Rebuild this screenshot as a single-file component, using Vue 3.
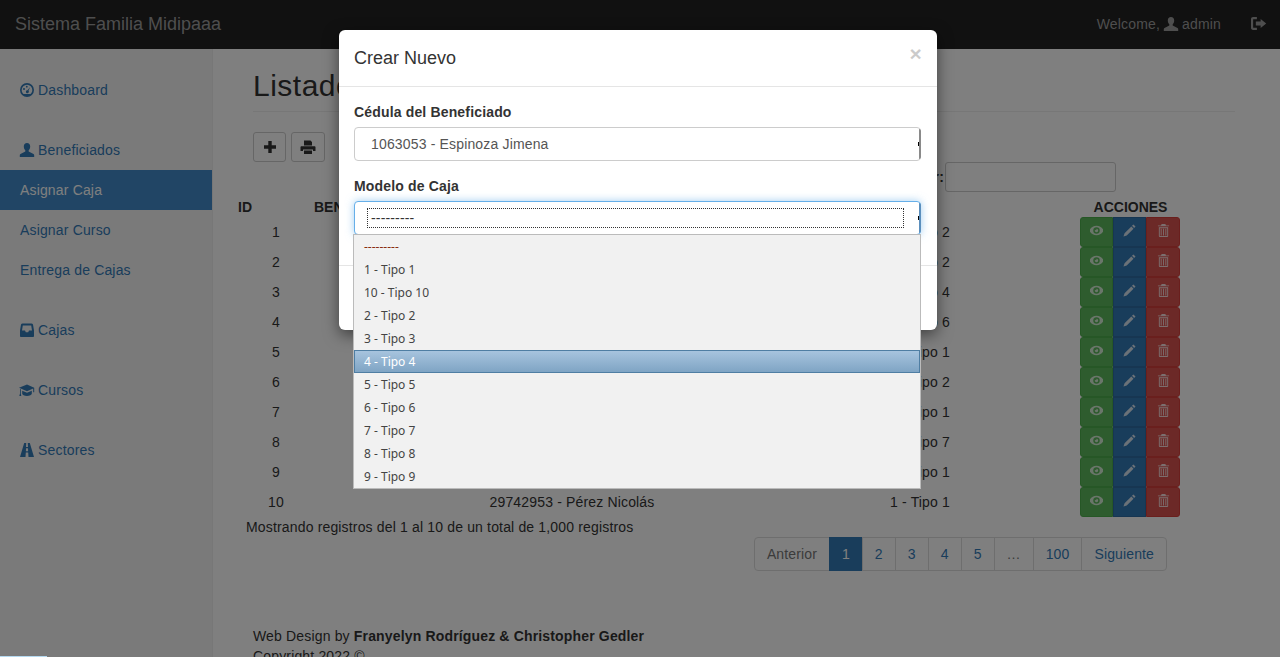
<template>
  <div class="page">
    <nav class="navbar">
      <span class="brand">Sistema Familia Midipaaa</span>
      <div class="nav-right">
        <span class="welcome">Welcome,
          <svg class="ico" :viewBox="box"><path :d="icons.user" /></svg>
          admin</span>
        <svg class="ico logout" :viewBox="box"><path :d="icons.logout" /></svg>
      </div>
    </nav>

    <div class="layout">
      <aside class="sidebar">
        <ul v-for="(group, g) in menu" :key="g" class="nav-group">
          <li v-for="item in group" :key="item.label" :class="{ active: item.active }">
            <svg v-if="item.icon" class="ico" :viewBox="box"><path :d="icons[item.icon]" fill-rule="evenodd" /></svg>
            {{ item.label }}
          </li>
        </ul>
      </aside>

      <main class="main">
        <h1>Listado de Asignaciones</h1>
        <div class="toolbar">
          <button class="btn-tool"><svg class="ico" :viewBox="box"><path :d="icons.plus" /></svg></button>
          <button class="btn-tool"><svg class="ico" :viewBox="box"><path :d="icons.print" fill-rule="evenodd" /></svg></button>
        </div>
        <div class="search">
          <label>Buscar:</label>
          <input type="text" />
        </div>
        <table class="grid">
          <thead>
            <tr>
              <th class="c-id">ID</th>
              <th class="c-ben">BENEFICIADO</th>
              <th class="c-mod">MODELO</th>
              <th class="c-act">ACCIONES</th>
            </tr>
          </thead>
          <tbody>
            <tr v-for="r in rows" :key="r.id">
              <td class="num">{{ r.id }}</td>
              <td class="num">{{ r.ben }}</td>
              <td class="num">{{ r.mod }} - Tipo {{ r.mod }}</td>
              <td>
                <div class="actions">
                  <span class="act green"><svg :viewBox="box"><path :d="icons.eye" fill-rule="evenodd" /></svg></span>
                  <span class="act blue"><svg :viewBox="box"><path :d="icons.pencil" /></svg></span>
                  <span class="act red"><svg :viewBox="box"><path :d="icons.trash" fill-rule="evenodd" /></svg></span>
                </div>
              </td>
            </tr>
          </tbody>
        </table>
        <p class="info">Mostrando registros del 1 al 10 de un total de 1,000 registros</p>
        <div class="pager">
          <span v-for="p in pages" :key="p.t" class="page-link" :class="{ on: p.on, off: p.off }">{{ p.t }}</span>
        </div>
        <footer class="foot">
          <div>Web Design by <b>Franyelyn Rodríguez &amp; Christopher Gedler</b></div>
          <div>Copyright 2022 ©</div>
        </footer>
      </main>
    </div>

    <div class="backdrop"></div>
    <div class="progress"></div>

    <div class="modal">
      <div class="modal-head">
        <h4>Crear Nuevo</h4>
        <span class="close">×</span>
      </div>
      <div class="modal-body">
        <div class="field">
          <label>Cédula del Beneficiado</label>
          <div class="select"><span class="value">1063053 - Espinoza Jimena</span></div>
        </div>
        <div class="field">
          <label>Modelo de Caja</label>
          <div class="select focus"><span class="value dotted">---------</span></div>
          <ul class="dropdown">
            <li v-for="o in options" :key="o" :class="{ hover: o === '4 - Tipo 4' }">{{ o }}</li>
          </ul>
        </div>
      </div>
      <div class="modal-foot"><button class="btn-save"></button></div>
    </div>
  </div>
</template>

<script setup>
const box = '1 1 14 14'

const icons = {
  user: 'M8 1c-2 0-3.2 1.5-3.2 3.5 0 1.500.6 3 1.500 3.800v1.300L1.500 12c-.5.3-.7.7-.7 1.200V15h14.400v-1.800c0-.5-.2-.9-.7-1.200l-4.800-2.400V8.300c.9-.8 1.500-2.300 1.500-3.800C11.200 2.500 10 1 8 1z',
  logout: 'M6.500 2v2H3.200C3 4 3 4.200 3 4.400v7.200c0 .2 0 .4.200.4h3.300v2H3C1.800 14 1 13.200 1 12V4c0-1.200.8-2 2-2zM10 3.800 15.200 8 10 12.200V9.800H5.500V6.200H10z',
  dashboard: 'M8 1a7 7 0 1 1 0 14A7 7 0 0 1 8 1zm0 1.700a5.300 5.300 0 0 0-5.300 5.300c0 1.600.7 3 1.800 4h7c1.100-1 1.800-2.400 1.800-4A5.300 5.300 0 0 0 8 2.700zM5 6a1 1 0 1 1 0 2 1 1 0 0 1 0-2zm2.800-2.200a.9.9 0 1 1 0 1.800.9.9 0 0 1 0-1.800zM11.200 5l-1.700 3.700a1.500 1.500 0 1 1-1-.5z',
  inbox: 'M3.500 1.500h9c.7 0 1.200.4 1.500 1l1 6V14c0 .6-.5 1-1 1H2c-.5 0-1-.4-1-1V8.500l1-6c.3-.6.8-1 1.500-1zm.3 2L3 8.500h3l.8 1.800h2.400l.8-1.800h3l-.8-5z',
  school: 'M8 2.500 0 5.800l8 3.400 6.200-2.600v3.600h1V5.800zM3.200 8.800v2.900c0 1.100 2.200 2.300 4.800 2.300s4.800-1.200 4.800-2.300V8.800L8 10.800zM1 7v4.500L.3 14h2L1.800 11.500V7.300z',
  road: 'M5.200 1h2l-.2 4h2l-.2-4h2L15 15H9.500l-.3-4.500H6.800L6.500 15H1zM7 6.300 6.900 9.300h2.200L9 6.300z',
  plus: 'M6.300 2h3.400v4.300H14v3.400H9.700V14H6.300V9.700H2V6.300h4.300z',
  print: 'M4 1.500h6.500L12 3v3.500H4zM1.500 7.200h13c.5 0 1 .4 1 1V12H13v-1.500H3V12H.5V8.200c0-.6.5-1 1-1zM4 11.500h8V15H4z',
  eye: 'M8 3c3.500 0 6.300 2.200 7.800 5-1.500 2.800-4.300 5-7.800 5S1.700 10.800.2 8C1.700 5.200 4.500 3 8 3zM8 4.500a3.500 3.500 0 1 0 0 7 3.500 3.500 0 0 0 0-7zM8 6.200a1.800 1.800 0 0 1 1.800 1.800c0 1-.8 1.800-1.800 1.800S6.200 9 6.200 8c0-.3 .1-.6 .2-.8.3.4.8.5 1.200.3.4-.3.5-.8.3-1.200z',
  pencil: 'M12.200 1.500 14.500 3.800 13 5.300 10.700 3zM10 3.700 12.300 6 5 13.300 1.500 14.500 2.700 11z',
  trash: 'M6 1h4l.7 1.500H14V3.500H2V2.500h3.300zM3 4.500h10v9.500c0 .6-.4 1-1 1H4c-.6 0-1-.4-1-1zM4 5.500V14h8V5.500zM5 6.200h1V13.300H5zM7.500 6.200h1V13.300h-1zM10 6.200h1V13.300h-1z'
}

const menu = [
  [{ label: 'Dashboard', icon: 'dashboard' }],
  [
    { label: 'Beneficiados', icon: 'user' },
    { label: 'Asignar Caja', active: true },
    { label: 'Asignar Curso' },
    { label: 'Entrega de Cajas' }
  ],
  [{ label: 'Cajas', icon: 'inbox' }],
  [{ label: 'Cursos', icon: 'school' }],
  [{ label: 'Sectores', icon: 'road' }]
]

// only the last beneficiary is visible, the rest stay under the modal
const mods = [2, 2, 4, 6, 1, 2, 1, 7, 1, 1]
const rows = mods.map((mod, i) => ({
  id: i + 1,
  mod,
  ben: i === 9 ? '29742953 - Pérez Nicolás' : ''
}))

const pages = [
  { t: 'Anterior', off: true },
  { t: '1', on: true },
  { t: '2' },
  { t: '3' },
  { t: '4' },
  { t: '5' },
  { t: '…', off: true },
  { t: '100' },
  { t: 'Siguiente' }
]

const options = [
  '---------', '1 - Tipo 1', '10 - Tipo 10', '2 - Tipo 2', '3 - Tipo 3',
  '4 - Tipo 4', '5 - Tipo 5', '6 - Tipo 6', '7 - Tipo 7', '8 - Tipo 8', '9 - Tipo 9'
]
</script>

<style>
html, body { margin: 0; height: 100%; overflow: hidden; }
</style>

<style scoped>
* { box-sizing: border-box; }
.page {
  height: 657px; position: relative; overflow: hidden; background: #fff;
  font-family: "Liberation Sans", Arial, sans-serif; font-size: 14px; line-height: 20px; color: #333;
  letter-spacing: .16px;
}
.ico { width: 14px; height: 14px; fill: currentColor; vertical-align: -2px; overflow: visible; }

.navbar {
  height: 49px; background: #222; display: flex; justify-content: space-between; align-items: center;
  padding: 0 14px 2px 15px; color: #9d9d9d;
}
.brand { font-size: 18px; letter-spacing: 0; }
.nav-right { display: flex; align-items: center; gap: 30px; }
.logout { width: 15px; height: 15px; }

.layout { display: flex; height: 608px; }
.sidebar { width: 213px; background: #f5f5f5; border-right: 1px solid #eee; padding-top: 21px; flex: none; }
.nav-group { list-style: none; margin: 0 0 20px; padding: 0; }
.nav-group li { height: 40px; padding: 10px 20px; color: #337ab7; }
.nav-group li.active { background: #428bca; color: #fff; }

.main { flex: 1; padding: 0 45px 0 25px; min-width: 0; }
h1 {
  margin: 19px 0 0 15px; padding-bottom: 8px; font-size: 30px; line-height: 36px; font-weight: 500;
  border-bottom: 1px solid #eee; height: 44px; white-space: nowrap; letter-spacing: .5px;
}
.toolbar { display: flex; gap: 5px; margin: 20px 0 0 15px; }
.btn-tool {
  width: 33px; height: 30px; background: #fff; border: 1px solid #ccc; border-radius: 3px; padding: 0; color: #333;
}
.btn-tool + .btn-tool { width: 34px; }
.search { display: flex; justify-content: flex-end; align-items: center; height: 30px; margin-right: 119px; font-weight: 700; }
.search input { width: 171px; height: 30px; margin-left: 1px; border: 1px solid #ccc; border-radius: 3px; background: #fff; }

.grid { border-collapse: collapse; table-layout: fixed; width: 1012px; margin-top: 5px; }
.grid th { height: 20px; padding: 0; text-align: left; font-weight: 700; letter-spacing: 0; }
.c-id { width: 76px; }
.c-ben { width: 516px; }
.c-mod { width: 180px; }
.c-act { width: 240px; text-align: center !important; }
.grid th.c-act { padding-left: 1px; }
.grid td { height: 30px; padding: 0; }
.num { text-align: center; }
.actions { display: flex; width: 100px; margin: 0 auto; }
.act { width: 33px; height: 30px; display: flex; justify-content: center; padding-top: 6px; }
.act svg { width: 13px; height: 13px; fill: rgba(255, 255, 255, .8); }
.green { background: #5cb85c; border: 1px solid #4cae4c; border-radius: 3px 0 0 3px; }
.green svg { fill: #d5ecd5; }
.blue { background: #337ab7; border: 1px solid #2e6da4; }
.red { width: 34px; background: #d9534f; border: 1px solid #d43f3a; border-radius: 0 3px 3px 0; }

.info { margin: 0 0 0 8px; }
.pager { display: flex; justify-content: flex-end; margin: 0 68px 0 0; letter-spacing: .13px; }
.page-link {
  height: 34px; padding: 6px 12px; background: #fff; border: 1px solid #ddd; margin-left: -1px; color: #337ab7;
}
.page-link:first-child { border-radius: 4px 0 0 4px; }
.page-link:last-child { border-radius: 0 4px 4px 0; }
.page-link.on { background: #337ab7; border-color: #337ab7; color: #fff; }
.page-link.off { color: #777; }
.foot { margin: 55px 0 0 15px; }

.backdrop { position: absolute; inset: 0; background: rgba(0, 0, 0, .5); }
.progress { position: absolute; left: 0; top: 656px; width: 47px; height: 1px; background: #b5d9f0; }

.modal {
  position: absolute; left: 339px; top: 30px; width: 598px; height: 300px; background: #fff;
  border-radius: 6px; box-shadow: 0 5px 15px rgba(0, 0, 0, .5);
}
.modal-head { height: 57px; padding: 15px; border-bottom: 1px solid #e5e5e5; display: flex; justify-content: space-between; }
h4 { margin: 0; font-size: 18px; line-height: 26px; font-weight: 500; letter-spacing: 0; }
.close { font-size: 21px; font-weight: 700; line-height: 18px; color: #000; opacity: .2; }
.modal-body { padding: 15px 16px 0 15px; height: 178px; }
.field { position: relative; margin-bottom: 15px; }
.field label { display: block; height: 20px; margin-bottom: 5px; font-weight: 700; }
.select {
  height: 34px; border: 1px solid #ccc; border-radius: 4px; background: #fff; color: #555;
  padding: 6px 0 0 16px; position: relative;
}
/* native select arrow area squeezed to a sliver, as in the reference */
.select::after {
  content: ""; position: absolute; right: -1px; top: 1px; bottom: 1px; width: 2px; background: #8a8a8a; border-radius: 0 3px 3px 0;
}
.select::before {
  content: ""; position: absolute; right: 1px; top: 14px; width: 1px; height: 4px; background: #000;
}
.select.focus { border-color: #66afe9; box-shadow: 0 0 8px rgba(102, 175, 233, .6); padding: 6px 16px 0 12px; }
.select.focus::after { background: #5b8fbd; }
.dotted { display: block; height: 20px; border: 1px dotted #333; line-height: 18px; padding-left: 3px; color: #333; }
.dropdown {
  position: absolute; left: -1px; top: 58px; width: 568px; margin: 0; padding: 0; list-style: none;
  background: #f1f1f1; border: 1px solid #bbb; z-index: 2; letter-spacing: 0;
  font-family: "Noto Sans", "Open Sans", sans-serif; font-size: 12px; color: #444;
}
.dropdown li { height: 23px; line-height: 23px; padding-left: 10px; }
.dropdown li:first-child { color: #8a2e12; }
.dropdown li.hover {
  background: linear-gradient(#a7c4de, #7fa4c4); border: 1px solid #4f7ea3; color: #fff; padding-left: 9px; line-height: 21px;
}
.modal-foot { padding: 15px 16px 15px 15px; border-top: 1px solid #e5e5e5; height: 65px; display: flex; justify-content: flex-end; }
.btn-save { height: 34px; width: 80px; background: #fff; border: 1px solid #ccc; border-radius: 4px; }
</style>
